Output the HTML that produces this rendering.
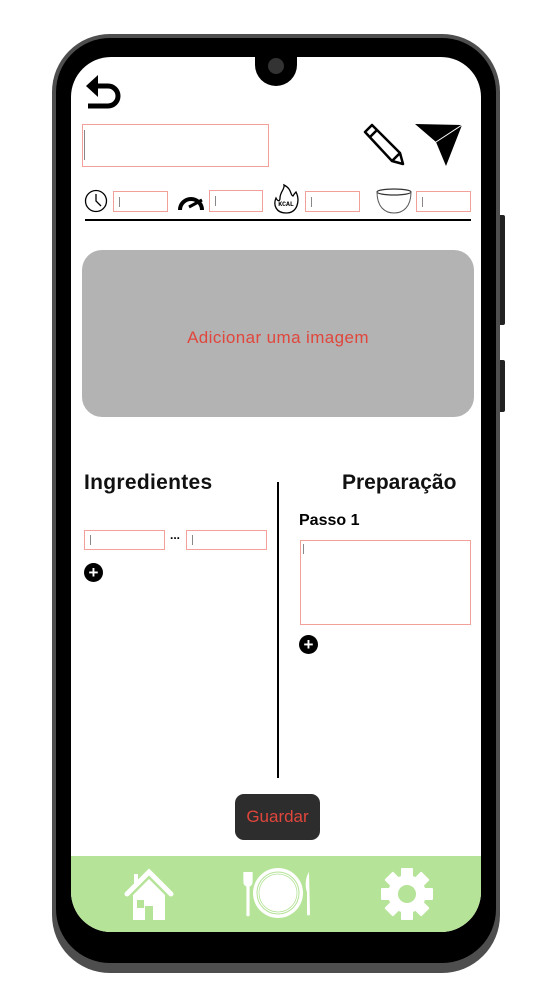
<!DOCTYPE html>
<html><head><meta charset="utf-8"><style>
*{margin:0;padding:0;box-sizing:border-box}
body{width:560px;height:994px;background:#fff;position:relative;overflow:hidden;font-family:"Liberation Sans","DejaVu Sans",sans-serif}
.a{position:absolute}
.inp{position:absolute;border:1px solid #f4a09a;background:#fff}
.c::after{content:"";position:absolute;left:5px;top:50%;width:1px;height:10px;margin-top:-5px;background:#888}
.h{font-weight:bold;font-size:21px;color:#111;font-family:"Liberation Sans",sans-serif}
.plus{position:absolute;width:19px;height:19px;border-radius:50%;background:#000;color:#fff;font-size:17px;line-height:19px;text-align:center;font-weight:bold}
</style></head><body>
<div class="a" style="left:52px;top:34px;width:448px;height:939px;border-radius:58px;background:#4e4e4e"></div>
<div class="a" style="left:56px;top:38px;width:440px;height:925px;border-radius:54px;background:#000"></div>
<div class="a" style="left:500px;top:215px;width:5px;height:110px;background:#222;border-radius:0 2px 2px 0"></div>
<div class="a" style="left:500px;top:360px;width:5px;height:52px;background:#222;border-radius:0 2px 2px 0"></div>
<div class="a" style="left:71px;top:57px;width:410px;height:875px;border-radius:40px;background:#fff;overflow:hidden">
  <div class="a" style="left:0;top:799px;width:410px;height:76px;background:#b5e398"></div>
</div>
<div class="a" style="left:255px;top:50px;width:42px;height:36px;border-radius:0 0 21px 21px;background:#000"></div>
<div class="a" style="left:268px;top:58px;width:16px;height:16px;border-radius:50%;background:#333"></div>
<svg class="a" style="left:84px;top:72px" width="40" height="38" viewBox="0 0 40 38"><path d="M4 34 H24 A10 10 0 0 0 24 14 H10" fill="none" stroke="#000" stroke-width="5"/><path d="M2 14 L14 3 L14 25 Z" fill="#000"/></svg>
<div class="inp" style="left:82px;top:124px;width:187px;height:43px"></div>
<div class="a" style="left:84px;top:130px;width:1px;height:30px;background:#888"></div>
<svg class="a" style="left:362px;top:122px" width="44" height="45" viewBox="0 0 44 45"><path d="M3 10 L10 3 L38 31 L41 42 L30 39 Z M8 15 L15 8 M30 39 L38 31" fill="none" stroke="#000" stroke-width="2.5" stroke-linejoin="round"/></svg>
<svg class="a" style="left:414px;top:122px" width="50" height="46" viewBox="0 0 50 46"><path d="M1 2 L48 3 L22 20 Z M48 3 L22 20 L32 44 Z" fill="#000"/><path d="M22 20 L48 3" stroke="#fff" stroke-width="1"/></svg>
<svg class="a" style="left:84px;top:189px" width="26" height="24" viewBox="0 0 26 24"><circle cx="12" cy="12" r="10.5" fill="none" stroke="#000" stroke-width="1.3"/><path d="M12 5 V12 L17 17" fill="none" stroke="#000" stroke-width="1.3"/></svg>
<div class="inp c" style="left:113px;top:191px;width:55px;height:21px"></div>
<svg class="a" style="left:176px;top:190px" width="30" height="22" viewBox="0 0 30 22"><path d="M4 20 A11 11 0 1 1 26 20" fill="none" stroke="#000" stroke-width="4"/><path d="M13 17 L26 10" stroke="#000" stroke-width="3"/></svg>
<div class="inp c" style="left:209px;top:190px;width:54px;height:22px"></div>
<svg class="a" style="left:272px;top:183px" width="28" height="32" viewBox="0 0 28 32"><path d="M14 30 C4 30 1 22 4 15 C6 19 8 18 8 15 C8 9 13 6 12 2 C20 6 18 12 21 13 C22 11 23 10 24 9 C28 17 26 30 14 30 Z" fill="none" stroke="#000" stroke-width="1.3"/><text x="14" y="23" font-size="6.5" text-anchor="middle" font-family="Liberation Mono,monospace" font-weight="bold">KCAL</text></svg>
<div class="inp c" style="left:305px;top:191px;width:55px;height:21px"></div>
<svg class="a" style="left:375px;top:187px" width="38" height="27" viewBox="0 0 38 27"><ellipse cx="19" cy="5" rx="17" ry="3" fill="none" stroke="#333" stroke-width="1.2"/><path d="M2 5 C2 20 10 26 19 26 C28 26 36 20 36 5" fill="none" stroke="#555" stroke-width="1"/></svg>
<div class="inp c" style="left:416px;top:191px;width:55px;height:21px"></div>
<div class="a" style="left:85px;top:219px;width:386px;height:2px;background:#000"></div>
<div class="a" style="left:82px;top:250px;width:392px;height:167px;border-radius:20px;background:#b3b3b3;color:#e0463c;font-size:17px;letter-spacing:0.4px;text-align:center;line-height:176px">Adicionar uma imagem</div>
<div class="a h" style="left:84px;top:471px;letter-spacing:0.3px">Ingredientes</div>
<div class="a h" style="left:342px;top:471px">Preparação</div>
<div class="a" style="left:277px;top:482px;width:2px;height:296px;background:#000"></div>
<div class="inp c" style="left:84px;top:530px;width:81px;height:20px"></div>
<div class="a" style="left:170px;top:528px;font-size:12px;font-weight:bold">...</div>
<div class="inp c" style="left:186px;top:530px;width:81px;height:20px"></div>
<div class="plus" style="left:84px;top:563px">+</div>
<div class="a" style="left:299px;top:512px;font-weight:bold;font-size:16px">Passo 1</div>
<div class="inp" style="left:300px;top:540px;width:171px;height:85px"></div>
<div class="a" style="left:303px;top:544px;width:1px;height:10px;background:#888"></div>
<div class="plus" style="left:299px;top:635px">+</div>
<div class="a" style="left:235px;top:794px;width:85px;height:46px;border-radius:9px;background:#2d2d2d;color:#e0463c;font-size:17px;text-align:center;line-height:46px">Guardar</div>
<svg class="a" style="left:124px;top:868px" width="50" height="52" viewBox="0 0 50 52"><path d="M3 26 L25 4 L47 26" fill="none" stroke="#fff" stroke-width="5" stroke-linecap="round"/><rect x="10" y="6" width="4" height="12" fill="#fff"/><path d="M9 27 L25 11 L41 27 V52 H29 V38 H21 V52 H9 Z" fill="#fff"/><rect x="13" y="32" width="7" height="8" fill="#b5e398"/></svg>
<svg class="a" style="left:243px;top:868px" width="70" height="50" viewBox="0 0 70 50"><path d="M1 4 V14 C1 17 3 18 4 18 V47 C4 48 6 48 6 47 V18 C7 18 9 17 9 14 V4 M4 4 V13 M6 4 V13" fill="#fff" stroke="#fff" stroke-width="1.2"/><circle cx="35" cy="25" r="25" fill="#fff"/><circle cx="35" cy="25" r="21" fill="none" stroke="#b5e398" stroke-width="1"/><circle cx="35" cy="25" r="19" fill="none" stroke="#b5e398" stroke-width="0.8"/><path d="M66 4 C62 10 62 20 64 24 V46 C64 48 67 48 67 46 Z" fill="#fff"/></svg>
<svg class="a" style="left:381px;top:868px" width="52" height="52" viewBox="0 0 52 52"><g fill="#fff" transform="translate(26 26)"><circle r="19"/><g id="t"><rect x="-6" y="-26" width="12" height="10" rx="1"/></g><use href="#t" transform="rotate(45)"/><use href="#t" transform="rotate(90)"/><use href="#t" transform="rotate(135)"/><use href="#t" transform="rotate(180)"/><use href="#t" transform="rotate(225)"/><use href="#t" transform="rotate(270)"/><use href="#t" transform="rotate(315)"/></g><circle cx="26" cy="26" r="9" fill="#b5e398"/></svg>
</body></html>
